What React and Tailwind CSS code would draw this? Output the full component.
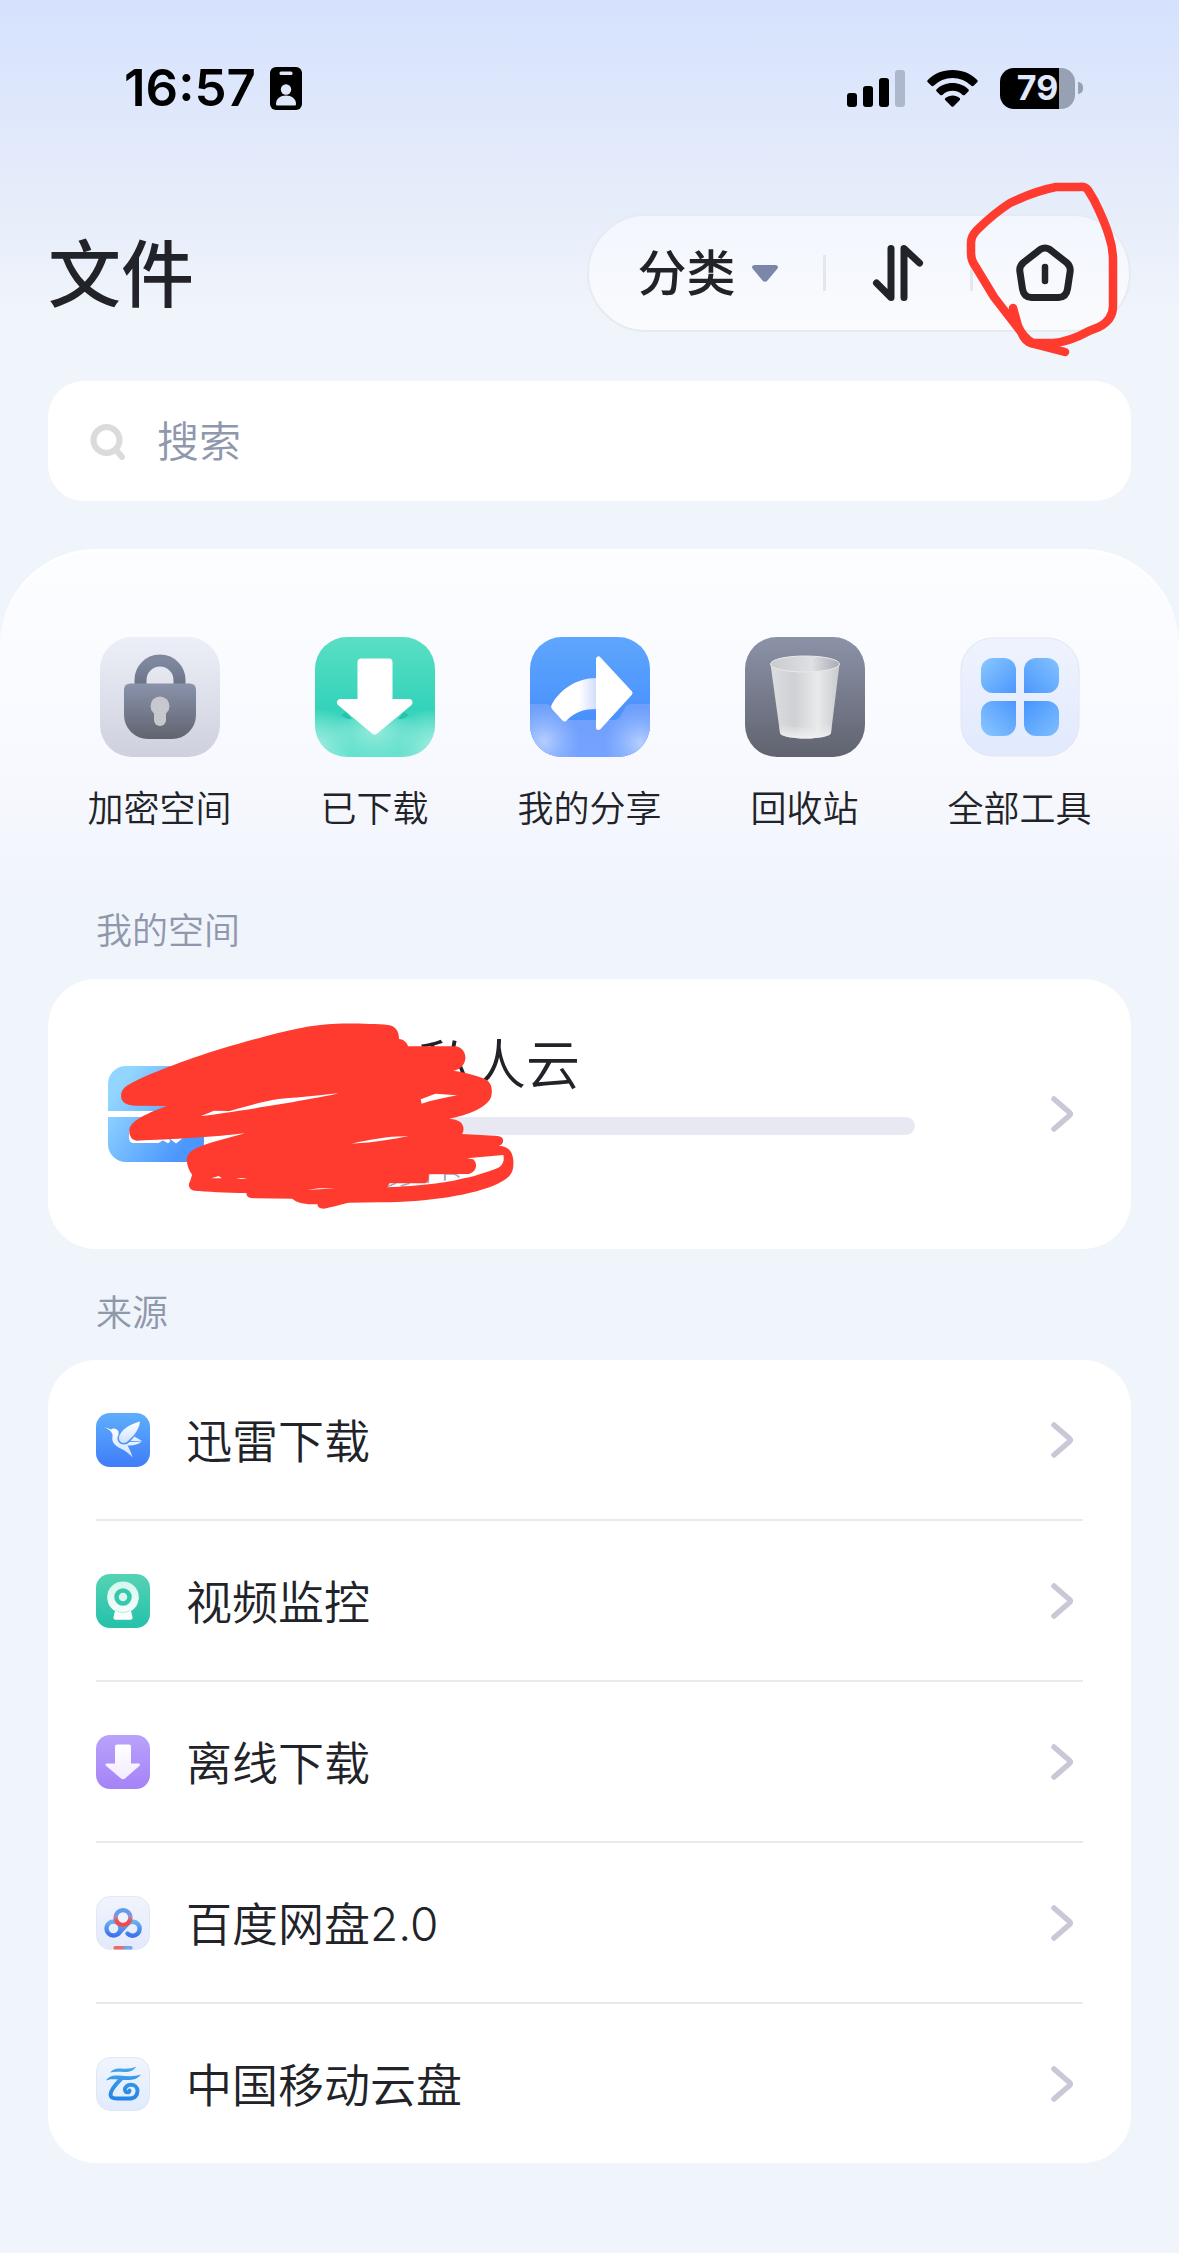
import React from "react";

const FONT = "font-['Inter','Noto_Sans_CJK_SC',sans-serif]";

function StatusBar() {
  return (
    <div className="flex h-[60px] items-center justify-between pr-[96px] pl-[124px]">
      <div className="flex items-center gap-[14px]">
        <span className="text-[51px] leading-[60px] font-semibold text-black">16:57</span>
        <svg width="32" height="43" viewBox="0 0 32 43" aria-hidden="true">
          <rect width="32" height="43" rx="6" fill="#000" />
          <rect x="9.500" y="4.500" width="13" height="3.500" rx="1.500" fill="#dfe8fb" />
          <circle cx="16" cy="22.500" r="5.200" fill="#dfe8fb" />
          <path d="M6 37c0-5.500 4.500-8.500 10-8.500S26 31.500 26 37c0 1-.6 1.500-1.500 1.500h-17C6.600 38.500 6 38 6 37z" fill="#dfe8fb" />
        </svg>
      </div>
      <div className="flex items-center gap-[22px]">
        <svg width="58" height="38" viewBox="0 0 58 38" aria-hidden="true">
          <rect x="0" y="24" width="10" height="14" rx="3" />
          <rect x="16" y="17" width="10" height="21" rx="3" />
          <rect x="32" y="9" width="10" height="29" rx="3" />
          <rect x="48" y="1" width="10" height="37" rx="3" fill="#aeb8cc" />
        </svg>
        <svg width="51" height="38" viewBox="0 0 51 38" aria-hidden="true">
          <path d="M25.500 1C35.500 1 44 4.600 50.200 11c.7.700.7 1.600 0 2.300l-3.600 3.500c-.6.600-1.500.6-2.200 0A27 27 0 0 0 25.500 9 27 27 0 0 0 6.600 16.800c-.7.600-1.600.6-2.200 0L.8 13.300c-.7-.7-.7-1.600 0-2.300C7 4.600 15.500 1 25.500 1z" />
          <path d="M25.500 14c6.300 0 11.700 2.300 15.800 6.200.7.700.7 1.600 0 2.300l-3.500 3.400c-.7.600-1.500.6-2.200 0a14.600 14.600 0 0 0-20.200 0c-.7.600-1.500.6-2.200 0l-3.500-3.400c-.7-.7-.7-1.600 0-2.300C13.800 16.300 19.200 14 25.500 14z" />
          <path d="M25.500 26.500c2.800 0 5.300 1 7.100 2.600.7.600.7 1.500 0 2.200l-5.900 6c-.7.700-1.700.7-2.400 0l-5.900-6c-.7-.7-.7-1.600 0-2.200a10.700 10.700 0 0 1 7.100-2.600z" />
        </svg>
        <div className="flex items-center gap-[3px]">
          <div className="flex h-[41px] w-[75px] items-center justify-center rounded-[14px] bg-linear-to-r from-black from-79% to-[#98a1b3] to-79%">
            <span className="text-[34px] leading-none font-bold text-[#e0e8fb]">79</span>
          </div>
          <span className="h-[12px] w-[5px] rounded-r-full bg-[#98a1b3]" />
        </div>
      </div>
    </div>
  );
}

function Header() {
  return (
    <header className="mt-[96px] flex h-[118px] items-center justify-between px-12">
      <h1 className="pt-[4px] text-[73px] leading-[100px] font-medium text-[#212328]">文件</h1>
      <div className="relative flex h-full w-[544px] items-center rounded-full border-2 border-[#e7eaf2] bg-linear-to-b from-[#f2f6fe] to-[#fafbfd]">
        <button type="button" className="flex h-full flex-1 items-center justify-center gap-[16px] pr-[8px] pl-[48px] text-[49px] leading-none font-medium text-[#212328]">
          分类
          <svg width="26" height="17" viewBox="0 0 26 17" aria-hidden="true">
            <path d="M2.500 0h21c2.200 0 3.200 2.200 1.800 3.800l-9.800 11.700c-1.300 1.600-3.700 1.600-5 0L.7 3.800C-.7 2.200.3 0 2.500 0z" fill="#7a87a8" />
          </svg>
        </button>
        <span className="ml-[37px] h-[36px] w-[3px] bg-[#e4e7ee]" />
        <button type="button" aria-label="排序" className="flex h-full w-[144px] items-center justify-center">
          <svg width="52" height="58" viewBox="0 0 52 58" fill="none" stroke="#212328" strokeWidth="7" strokeLinecap="round" strokeLinejoin="round" aria-hidden="true">
            <path d="M19 4.500v49L4.500 39M32 53.500v-49L47.500 19" />
          </svg>
        </button>
        <span className="h-[36px] w-[3px] bg-[#e4e7ee]" />
        <button type="button" aria-label="私人云空间" className="flex h-full w-[156px] items-center justify-center pr-[13px]">
          <svg width="60" height="60" viewBox="0 0 60 60" fill="none" stroke="#212328" strokeWidth="7" strokeLinecap="round" strokeLinejoin="round" aria-hidden="true">
            <path d="M25.500 6.300Q30 3.600 34.500 6.300L51.500 19.500Q55.600 23 55.200 28L52.500 46Q51.200 54.300 43.500 54.500H16.500Q8.800 54.300 7.500 46L4.800 28Q4.400 23 8.500 19.500Z" />
            <path d="M30 24v14" strokeWidth="6.500" />
          </svg>
        </button>
        <svg className="pointer-events-none absolute top-[-36px] right-[8px]" width="160" height="180" viewBox="960 180 160 180" fill="none" stroke="#ff3b30" strokeWidth="8.500" strokeLinecap="round" strokeLinejoin="round" aria-hidden="true">
          <path d="M1064 352L1031 343.500Q1024 342 1020 332L993 297L973 264Q970 260 970 252V243Q970 236 976 230Q992 214 1009 203Q1034 191 1055 187H1078Q1084 186 1087 190L1093 200Q1104 222 1108 236Q1112 248 1112 260V306Q1112 320 1098 327L1088 331Q1068 342 1052 343H1032Q1022 338 1017 326L1012 308" />
        </svg>
      </div>
    </header>
  );
}

function SearchBox() {
  return (
    <label className="mx-12 mt-[49px] flex h-[120px] items-center gap-[30px] rounded-[36px] bg-white px-[42px]">
      <svg width="37" height="38" viewBox="0 0 37 38" fill="none" stroke="#d9dbdc" strokeWidth="6" strokeLinecap="round" aria-hidden="true">
        <circle cx="16.500" cy="18" r="13" />
        <path d="M26 28l6 7" />
      </svg>
      <input type="text" aria-label="搜索" placeholder="搜索" className="h-full min-w-0 flex-1 bg-transparent text-[42px] font-[350] text-[#212328] outline-none placeholder:text-[#8f97ac]" />
    </label>
  );
}

function Tile({ children }) {
  return (
    <svg width="120" height="120" viewBox="0 0 120 120" aria-hidden="true">
      {children}
    </svg>
  );
}

function Grad({ id, from, to, x2 = "0", y2 = "1" }) {
  return (
    <linearGradient id={id} x1="0" y1="0" x2={x2} y2={y2}>
      <stop stopColor={from} />
      <stop offset="1" stopColor={to} />
    </linearGradient>
  );
}

const LockIcon = () => (
  <Tile>
    <defs>
      <Grad id="lockBg" from="#edeff8" to="#ced0dd" />
      <Grad id="lockBody" from="#8a93ab" to="#60646f" />
      <Grad id="lockHook" from="#7f88a0" to="#6c7283" />
    </defs>
    <rect width="120" height="120" rx="32" fill="url(#lockBg)" />
    <path d="M40.500 50V43a19.500 19.500 0 0 1 39 0v7" fill="none" stroke="url(#lockHook)" strokeWidth="12" />
    <path d="M30 46.500h60a6 6 0 0 1 6 6V78a24 24 0 0 1-24 24H48a24 24 0 0 1-24-24V52.500a6 6 0 0 1 6-6z" fill="url(#lockBody)" />
    <circle cx="60" cy="69" r="9.500" fill="#c6c8cd" />
    <path d="M60 72v11" stroke="#c6c8cd" strokeWidth="12" strokeLinecap="round" />
  </Tile>
);

const DownloadedIcon = () => (
  <Tile>
    <defs>
      <linearGradient id="dlBg" x1="0" y1="0" x2="0" y2="1">
        <stop stopColor="#5adfc4" />
        <stop offset=".6" stopColor="#33d3ba" />
        <stop offset=".75" stopColor="#4cdac5" />
        <stop offset="1" stopColor="#69e2d0" />
      </linearGradient>
      <radialGradient id="dlGlow">
        <stop stopColor="#b9f2e6" stopOpacity=".65" />
        <stop offset="1" stopColor="#b9f2e6" stopOpacity="0" />
      </radialGradient>
      <clipPath id="dlClip"><rect width="120" height="120" rx="32" /></clipPath>
    </defs>
    <g clipPath="url(#dlClip)">
      <rect width="120" height="120" fill="url(#dlBg)" />
      <ellipse cx="60" cy="94" rx="44" ry="26" fill="url(#dlGlow)" />
      <circle cx="4" cy="106" r="34" fill="url(#dlGlow)" />
      <circle cx="116" cy="106" r="34" fill="url(#dlGlow)" />
      <path d="M26 78q5 5 11 4l-6-7zM94 78q-5 5-11 4l6-7z" fill="#25c4ac" />
    </g>
    <path d="M46 25h28v40.500h20L59.700 94 25.500 65.500H46z" fill="#fff" stroke="#fff" strokeWidth="7" strokeLinejoin="round" />
  </Tile>
);

const ShareIcon = () => (
  <Tile>
    <defs>
      <Grad id="shBg" from="#5ea6fd" to="#3f87fb" />
      <Grad id="shLow" from="#6d9ffb" to="#75a3ff" />
      <linearGradient id="shTail" x1="0" y1="0" x2="1" y2="0">
        <stop offset=".6" stopColor="#fff" />
        <stop offset="1" stopColor="#cfdcfb" />
      </linearGradient>
      <radialGradient id="shGlow">
        <stop stopColor="#d3e2ff" stopOpacity=".7" />
        <stop offset="1" stopColor="#a8c6ff" stopOpacity="0" />
      </radialGradient>
      <clipPath id="shClip"><rect width="120" height="120" rx="32" /></clipPath>
    </defs>
    <g clipPath="url(#shClip)">
      <rect width="120" height="120" fill="url(#shBg)" />
      <path d="M0 67h16q4 0 6 3l8 9q4 4 9 4h45q4 0 6-3l5-9q2-4 7-4h18v53H0z" fill="url(#shLow)" />
      <circle cx="14" cy="104" r="36" fill="url(#shGlow)" />
      <circle cx="110" cy="106" r="36" fill="url(#shGlow)" />
    </g>
    <path d="M67 41C45 41 29 54 21.500 68q-1 2 .5 4l10 11q3 3 5 0c8-8 17-11 30-11z" fill="url(#shTail)" />
    <path d="M68.500 22v68.500L100 56z" fill="#fff" stroke="#fff" strokeWidth="5" strokeLinejoin="round" />
  </Tile>
);

const BinIcon = () => (
  <Tile>
    <defs>
      <Grad id="binBg" from="#8c92a8" to="#60636f" />
      <linearGradient id="binBody" x1="0" y1="0" x2="1" y2="0">
        <stop stopColor="#dcdddf" />
        <stop offset=".35" stopColor="#d0d1d5" />
        <stop offset=".68" stopColor="#e9eaea" />
        <stop offset="1" stopColor="#c9cace" />
      </linearGradient>
      <linearGradient id="binRim" x1="0" y1="0" x2="1" y2="0">
        <stop stopColor="#c9cacf" />
        <stop offset=".6" stopColor="#dfe0e3" />
        <stop offset="1" stopColor="#a9abb2" />
      </linearGradient>
      <linearGradient id="binBase" x1="0" y1="0" x2="0" y2="1">
        <stop stopColor="#e8e9ea" stopOpacity="0" />
        <stop offset="1" stopColor="#f0f0f1" />
      </linearGradient>
    </defs>
    <rect width="120" height="120" rx="32" fill="url(#binBg)" />
    <path d="M25.500 27h69L86 96c0 3-12 5.500-25.500 5.500S35 99 35 96z" fill="url(#binBody)" />
    <path d="M34 86q26 9 53 0l-1 10c0 3-12 5.500-25.500 5.500S35 99 35 96z" fill="url(#binBase)" />
    <ellipse cx="60" cy="27" rx="34.500" ry="8" fill="url(#binRim)" stroke="#e9eaec" strokeWidth="1" />
  </Tile>
);

const AllToolsIcon = () => (
  <Tile>
    <defs>
      <Grad id="allBg" from="#eff3fe" to="#e1e9fd" />
      <Grad id="allA" from="#8ac8ff" to="#4c97fd" x2="1" />
      <linearGradient id="allB" x1="1" y1="0" x2="0" y2="1"><stop stopColor="#83c3ff" /><stop offset="1" stopColor="#4c97fd" /></linearGradient>
      <linearGradient id="allC" x1="0" y1="1" x2="1" y2="0"><stop stopColor="#8ac8ff" /><stop offset="1" stopColor="#4c97fd" /></linearGradient>
      <linearGradient id="allD" x1="1" y1="1" x2="0" y2="0"><stop stopColor="#7ebfff" /><stop offset="1" stopColor="#4794fd" /></linearGradient>
    </defs>
    <rect x="1" y="1" width="118" height="118" rx="32" fill="url(#allBg)" stroke="#e2e6f3" />
    <path d="M33 21h11a12 12 0 0 1 12 12v23H33a12 12 0 0 1-12-12V33a12 12 0 0 1 12-12z" fill="url(#allA)" />
    <path d="M76 21h11a12 12 0 0 1 12 12v11a12 12 0 0 1-12 12H64V33a12 12 0 0 1 12-12z" fill="url(#allB)" />
    <path d="M33 64h23v23a12 12 0 0 1-12 12H33a12 12 0 0 1-12-12V76a12 12 0 0 1 12-12z" fill="url(#allC)" />
    <path d="M64 64h23a12 12 0 0 1 12 12v11a12 12 0 0 1-12 12H76a12 12 0 0 1-12-12z" fill="url(#allD)" />
  </Tile>
);

const TOOLS = [
  { label: "加密空间", Icon: LockIcon },
  { label: "已下载", Icon: DownloadedIcon },
  { label: "我的分享", Icon: ShareIcon },
  { label: "回收站", Icon: BinIcon },
  { label: "全部工具", Icon: AllToolsIcon },
];

function Chevron() {
  return (
    <svg className="mr-[8px] shrink-0" width="26" height="40" viewBox="0 0 26 40" fill="none" stroke="#c8c8d6" strokeWidth="5.500" strokeLinecap="round" strokeLinejoin="round" aria-hidden="true">
      <path d="M5 5L20.500 18.500Q22 20 20.500 21.500L5 35" />
    </svg>
  );
}

function Scribble() {
  return (
    <svg className="pointer-events-none absolute top-[-9px] left-[-8px]" width="620" height="290" viewBox="0 0 1568 870" preserveAspectRatio="none" aria-hidden="true">
      <path d="M878 650L900 640M912 648L935 640M982 640V612M1024 632V612M1024 612H1045Q1056 614 1060 622" fill="none" stroke="#a7a9bd" strokeWidth="5" />
      <path
        fill="#ff3b30"
        fillRule="evenodd"
        d="M205 378C205 355 218 347 250 328C300 300 400 255 500 222C600 188 680 163 750 161C800 160 850 162 880 165C900 168 908 185 908 207C920 209 928 217 931 229L1050 229C1070 232 1076 250 1076 265C1074 285 1062 300 1045 302C1080 308 1115 320 1130 330C1145 345 1144 365 1141 380C1130 415 1080 435 1035 446C1060 448 1072 460 1071 478C1071 485 1069 490 1067 492L1150 497C1170 498 1172 505 1171 515C1170 522 1165 526 1160 527C1185 528 1195 545 1197 570C1199 610 1190 620 1160 640C1100 675 980 697 860 697L780 698C755 705 735 712 718 716C705 716 702 710 702 703C670 703 650 700 638 686L540 685C525 683 522 678 522 669C470 668 420 665 390 662C378 658 376 650 377 640C382 630 382 620 385 614C375 600 371 580 371 565C375 540 400 530 440 515L518 490C450 500 330 509 245 512C230 510 225 495 226 480C228 455 260 435 320 408L240 407C215 405 205 395 205 378Z
        M407 438L440 422L480 423C530 405 580 390 610 386C660 383 720 374 755 370C700 386 500 425 407 438Z
        M963 388L1000 371L1055 376C1020 385 990 390 965 401Z
        M788 521C840 508 880 498 932 499C890 507 850 518 788 521Z
        M1080 565L1172 555C1176 580 1165 592 1150 598C1110 615 1080 625 1066 626C1030 638 960 647 878 652L884 640L975 640Q984 636 983 613L1085 612C1105 605 1108 580 1095 568Z
        M433 625L452 618L460 625ZM495 627L510 624L525 627ZM676 660L705 655L748 655Z"
      />
    </svg>
  );
}

function DiskIcon() {
  return (
    <svg className="shrink-0" width="96" height="96" viewBox="0 0 96 96" aria-hidden="true">
      <defs>
        <linearGradient id="disk" gradientUnits="userSpaceOnUse" x1="0" y1="20" x2="80" y2="76">
          <stop offset=".1" stopColor="#92d6ff" />
          <stop offset="1" stopColor="#4b97fd" />
        </linearGradient>
      </defs>
      <path d="M18 0h60a18 18 0 0 1 18 18v27H0V18A18 18 0 0 1 18 0z" fill="url(#disk)" />
      <path d="M0 51h96v27a18 18 0 0 1-18 18H18A18 18 0 0 1 0 78z" fill="url(#disk)" />
      <path d="M23 66v6q0 3 3 3h24l5-3 5 3M64 72l4 3 5-4" fill="none" stroke="#fff" strokeWidth="4" strokeLinecap="round" />
    </svg>
  );
}

function SpaceCard() {
  return (
    <a href="#space" className="relative mx-12 mt-[21px] flex h-[270px] items-center rounded-[48px] bg-white pr-12 pl-[60px]">
      <DiskIcon />
      <div className="ml-[36px] flex w-[675px] flex-col">
        <span className="pl-[178px] text-[54px] leading-[72px] font-[350] text-[#212328]">私人云</span>
        <span className="mt-[15px] h-[18px] rounded-full bg-[#e8e8f2]" />
        <span className="h-[64px]" />
      </div>
      <span className="ml-auto flex">
        <Chevron />
      </span>
      <Scribble />
    </a>
  );
}

function SmallTile({ children }) {
  return (
    <svg className="shrink-0" width="54" height="54" viewBox="0 0 54 54" aria-hidden="true">
      {children}
    </svg>
  );
}

const BirdIcon = () => (
  <SmallTile>
    <defs>
      <Grad id="birdBg" from="#5eaefc" to="#3f7df9" />
      <Grad id="birdFg" from="#ffffff" to="#cfe2ff" />
    </defs>
    <rect width="54" height="54" rx="14" fill="url(#birdBg)" />
    <path d="M8 14L15 16.500C17 14.500 21 15.500 22.500 18.500L22.500 22C20.500 25 21.500 29 25 31C28 32 31.500 31.500 33.500 29L46 28.500C42 31.500 37 33 31.500 32.500C33.500 36 35.500 40 36.500 44.500C32 39 27 36.500 22.500 34.500C17.500 31.500 15.500 27.500 16.500 23.500C17 20 15 17.500 8 14Z" fill="url(#birdFg)" />
    <path d="M44 8.500C43.500 13.500 41 18 38 22L33 27C31 29.500 28 30.500 25.500 29.500C22.500 27.500 22.500 24.500 24 21.500C27.500 15 35 11 44 8.500Z" fill="url(#birdFg)" />
    <path d="M38.500 23.500L46 28L34.500 28Z" fill="#e3eeff" />
  </SmallTile>
);

const CameraIcon = () => (
  <SmallTile>
    <defs>
      <Grad id="camBg" from="#55d3b4" to="#24c1ab" />
      <Grad id="camFg" from="#d4f7ec" to="#ffffff" />
    </defs>
    <rect width="54" height="54" rx="14" fill="url(#camBg)" />
    <path d="M27 7.500a15.800 15.800 0 0 1 8 29.500L36.500 43q.5 2.700-2.500 2.700h-14Q17 45.700 17.500 43l1.500-6A15.800 15.800 0 0 1 27 7.500z" fill="url(#camFg)" />
    <path d="M19.500 36.500q7.500 4 15 0" fill="none" stroke="#b5eee1" strokeWidth="1" />
    <circle cx="27" cy="23" r="6.500" fill="#d7f7ee" stroke="#36c8ae" strokeWidth="4.500" />
  </SmallTile>
);

const OfflineIcon = () => (
  <SmallTile>
    <defs>
      <Grad id="offBg" from="#b8a2fa" to="#a583f8" />
      <Grad id="offFg" from="#ffffff" to="#f3ebff" />
    </defs>
    <rect width="54" height="54" rx="14" fill="url(#offBg)" />
    <path d="M21 9.500h12q2 0 2 2V28.500h7.500q2.500.3 1 2.200L29 43.500q-2 1.500-4 0L10 30.700q-1.500-1.900 1-2.200h8v-17q0-2 2-2z" fill="url(#offFg)" />
  </SmallTile>
);

const BaiduIcon = () => (
  <SmallTile>
    <defs>
      <Grad id="bdBg" from="#f1f4fd" to="#e2e9fb" />
      <linearGradient id="bdTop" x1="0" y1="0" x2="0" y2="1">
        <stop offset=".1" stopColor="#5b9df1" />
        <stop offset=".45" stopColor="#a48bc0" />
        <stop offset=".75" stopColor="#ef4a4c" />
      </linearGradient>
      <Grad id="bdLow" from="#6bb0ee" to="#3f73ee" />
      <linearGradient id="bdBar" x1="0" y1="0" x2="1" y2="0">
        <stop offset=".4" stopColor="#ec6a66" />
        <stop offset=".65" stopColor="#6ea6f0" />
      </linearGradient>
    </defs>
    <rect x=".5" y=".5" width="53" height="53" rx="14" fill="url(#bdBg)" stroke="#e3e7f2" />
    <circle cx="17.500" cy="32.500" r="7" fill="none" stroke="url(#bdLow)" strokeWidth="4.400" />
    <path d="M22 38L32 27.500A7 7 0 1 1 31.500 37.500" fill="none" stroke="url(#bdLow)" strokeWidth="4.400" strokeLinecap="round" />
    <circle cx="27" cy="21.500" r="7.400" fill="#edf2fd" stroke="url(#bdTop)" strokeWidth="4.400" />
    <rect x="17.500" y="50" width="19" height="3.500" rx="1.500" fill="url(#bdBar)" />
  </SmallTile>
);

const MobileCloudIcon = () => (
  <SmallTile>
    <defs>
      <Grad id="mcBg" from="#f0f5fe" to="#e1ebfc" />
      <linearGradient id="mcFg" gradientUnits="userSpaceOnUse" x1="0" y1="8" x2="0" y2="44">
        <stop stopColor="#4ba7ea" />
        <stop offset="1" stopColor="#2183e6" />
      </linearGradient>
    </defs>
    <rect x=".5" y=".5" width="53" height="53" rx="14" fill="url(#mcBg)" stroke="#e1e7f2" />
    <path d="M14 15.500C17 12 20 11 25 11.500C31 12 36 11.500 40.500 9.500C37.500 13.500 34 15.200 28 15C22 14.600 18 14.500 14 15.500Z" fill="url(#mcFg)" />
    <path d="M10 23.500C13 19 17 18 23 18.500C31 19.200 38 20 45 17.500C41 22.500 36 23.500 28 23C20 22.500 15 21.500 10 23.500Z" fill="url(#mcFg)" />
    <path d="M25 22C19 28 14.500 33 14.500 37.500C14.500 40.500 17 41.500 21 41.500H33C39 41.500 41.500 38 41.500 34C41.500 30 38.500 27.800 35 27.800C31 27.800 28.500 30.500 29 33.200C29.500 36 33.500 36 33.500 33.500" fill="none" stroke="url(#mcFg)" strokeWidth="3.900" strokeLinecap="round" />
  </SmallTile>
);

const SOURCES = [
  { label: "迅雷下载", Icon: BirdIcon },
  { label: "视频监控", Icon: CameraIcon },
  { label: "离线下载", Icon: OfflineIcon },
  { label: "百度网盘2.0", Icon: BaiduIcon },
  { label: "中国移动云盘", Icon: MobileCloudIcon },
];

export default function App() {
  return (
    <div className={`${FONT} min-h-screen bg-[#f0f4fb] bg-linear-[180deg,#d5e1fd_0px,#dfe8fb_110px,#e7eefa_220px,#f0f4fb_310px] pt-[58px] pb-[88px]`}>
      <StatusBar />
      <Header />
      <SearchBox />
      <main className="mt-12 rounded-t-[96px] border-t-[3px] border-white bg-linear-[180deg,#fcfdff_0px,#f9faff_180px,#f0f4fb_350px] pt-[85px]">
        <nav className="grid grid-cols-5 px-[52px]">
          {TOOLS.map(({ label, Icon }) => (
            <button key={label} type="button" className="flex flex-col items-center gap-[25px] text-[36px] leading-[54px] font-[350] text-[#212328]">
              <Icon />
              {label}
            </button>
          ))}
        </nav>
        <h2 className="mt-[68px] pl-24 text-[36px] leading-[54px] font-[350] text-[#8f97ac]">我的空间</h2>
        <SpaceCard />
        <h2 className="mt-[37px] pl-24 text-[36px] leading-[54px] font-[350] text-[#8f97ac]">来源</h2>
        <ul className="mx-12 mt-[20px] rounded-[48px] bg-white px-12">
          {SOURCES.map(({ label, Icon }) => (
            <li key={label} className="border-b-2 border-[#e9eaf0] last:border-b-0">
              <a href="#source" className="flex h-[159px] items-center">
                <Icon />
                <span className="ml-[36px] flex-1 pt-[3px] text-[46px] leading-[60px] font-[350] text-[#212328]">{label}</span>
                <Chevron />
              </a>
            </li>
          ))}
        </ul>
      </main>
    </div>
  );
}
